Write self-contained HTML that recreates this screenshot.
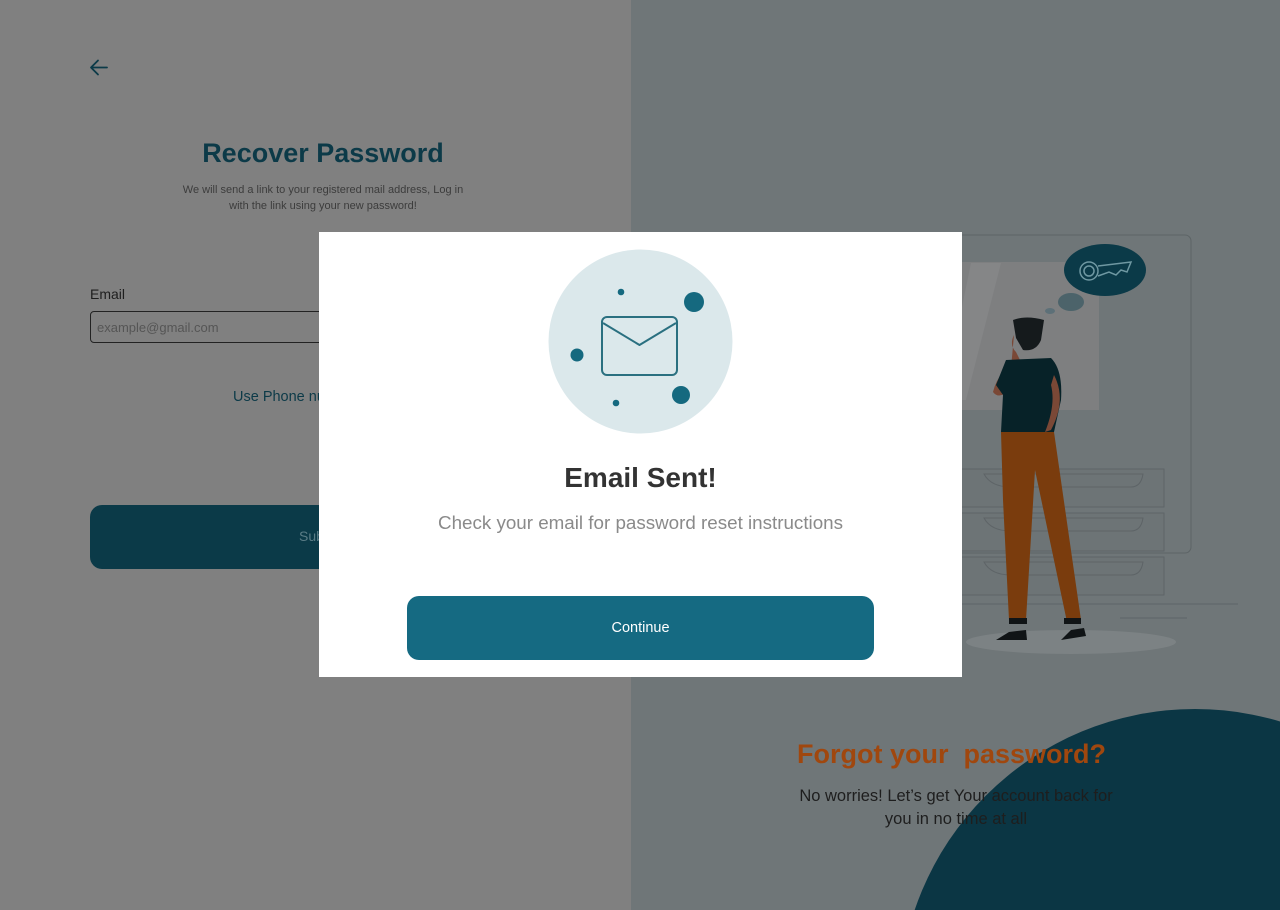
<!DOCTYPE html>
<html><head><meta charset="utf-8"><style>
*{margin:0;padding:0;box-sizing:border-box}
html,body{width:1280px;height:910px;overflow:hidden}
body{position:relative;font-family:"Liberation Sans",sans-serif;background:#808080}
.left{position:absolute;left:0;top:0;width:631px;height:910px;background:#808080;overflow:hidden}
.right{position:absolute;left:631px;top:0;width:649px;height:910px;background:#6f7678;overflow:hidden}
.abs{position:absolute}
</style></head><body>
<div class="left">
  <svg class="abs" style="left:88px;top:57px" width="22" height="22" viewBox="0 0 22 22"><path d="M19 10.5H3M10 3.5L3 10.5L10 17.5" fill="none" stroke="#0c3a48" stroke-width="1.8" stroke-linecap="round" stroke-linejoin="round"/></svg>
  <div class="abs" style="left:0;width:646px;top:138px;text-align:center;font-size:27px;font-weight:bold;color:#0c3a48">Recover Password</div>
  <div class="abs" style="left:123px;width:400px;top:182px;text-align:center;font-size:11px;line-height:16px;color:#3c3c3c;white-space:nowrap">We will send a link to your registered mail address, Log in<br>with the link using your new password!</div>
  <div class="abs" style="left:90px;top:286px;font-size:14px;color:#1e1e1e">Email</div>
  <div class="abs" style="left:90px;top:311px;width:560px;height:32px;border:1px solid #222;border-radius:4px;padding:8px 6px;font-size:13px;color:#555">example@gmail.com</div>
  <div class="abs" style="left:233px;top:389px;font-size:14.5px;color:#0c3a48">Use Phone number</div>
  <div class="abs" style="left:90px;top:505px;width:560px;height:64px;border-radius:12px;background:#0b3a48;color:#5a7c86;font-size:14px;padding:23px 0 0 209px">Submit</div>
</div>
<div class="right">
  <svg class="abs" style="left:0;top:0" width="649" height="910">
    <circle cx="564" cy="1005" r="296" fill="#0b3644"/>
    <rect x="240" y="235" width="320" height="318" rx="6" fill="none" stroke="#5d6466" stroke-width="1"/>
    <rect x="240" y="262" width="228" height="148" fill="#7e7f80"/>
    <path d="M340 263 L370 263 L335 400 L312 400Z" fill="#858687"/>
    <g fill="#6d7476" stroke="#5e6467" stroke-width="1">
      <rect x="270" y="469" width="263" height="38"/>
      <rect x="270" y="513" width="263" height="38"/>
      <rect x="270" y="557" width="263" height="38"/>
    </g>
    <g fill="none" stroke="#5e6467"><path d="M353 474 Q360 487 380 487 H500 Q510 487 512 474Z"/><path d="M353 518 Q360 531 380 531 H500 Q510 531 512 518Z"/><path d="M353 562 Q360 575 380 575 H500 Q510 575 512 562Z"/></g>
    <line x1="270" y1="604" x2="607" y2="604" stroke="#5e6467"/>
    <line x1="489" y1="618" x2="556" y2="618" stroke="#5e6467"/>
    <ellipse cx="440" cy="642" rx="105" ry="12" fill="#7c8284"/>
    <ellipse cx="474" cy="270" rx="41" ry="26" fill="#0b3a48"/>
    <g fill="none" stroke="#6f98a2" stroke-width="1.5"><circle cx="458" cy="271" r="9"/><circle cx="458" cy="271" r="5"/><path d="M467 266 L500 262 L496 272 L490 270 L485 275 L478 272 L467 276"/></g>
    <ellipse cx="440" cy="302" rx="13" ry="9" fill="#4c636a"/>
    <ellipse cx="419" cy="311" rx="5" ry="3" fill="#5d7078"/>
    <path d="M382 320 Q395 315 413 320 L410 340 Q405 352 392 350 L385 338Z" fill="#151a1c"/>
    <path d="M383 335 Q378 345 385 352 L389 360 L372 372 Q365 380 362 392 Q368 400 378 390Z" fill="#7a4836"/>
    <path d="M375 360 L420 358 Q432 370 430 400 L423 432 L370 432 L372 395 L365 385Z" fill="#072228"/>
    <path d="M423 375 Q436 400 420 430 L414 432 Q425 405 420 385Z" fill="#7a4836"/>
    <path d="M370 432 L423 432 L450 620 L436 622 L404 470 L395 620 L378 620 L372 500Z" fill="#7a3c0d"/>
    <rect x="378" y="618" width="18" height="6" fill="#101416"/>
    <rect x="433" y="618" width="17" height="6" fill="#101416"/>
    <path d="M365 640 L378 632 L395 630 L396 640Z" fill="#101416"/>
    <path d="M430 640 L440 630 L453 628 L455 636Z" fill="#101416"/>
  </svg>
  <div class="abs" style="left:-4px;width:649px;top:739px;text-align:center;font-size:27px;font-weight:bold;color:#a0470e">Forgot your&nbsp; password?</div>
  <div class="abs" style="left:100px;width:450px;top:785px;text-align:center;font-size:16.5px;line-height:23px;color:#1e1e1e;white-space:nowrap">No worries! Let’s get Your account back for<br>you in no time at all</div>
</div>
<div class="abs" style="left:319px;top:232px;width:643px;height:445px;background:#fff">
  <svg class="abs" style="left:229px;top:17px" width="185" height="185" viewBox="0 0 185 185">
    <circle cx="92.5" cy="92.5" r="92" fill="#dbe8eb"/>
    <circle cx="73" cy="43" r="3.3" fill="#15697f"/>
    <circle cx="146" cy="53" r="10" fill="#15697f"/>
    <circle cx="29" cy="106" r="6.5" fill="#15697f"/>
    <circle cx="133" cy="146" r="9" fill="#15697f"/>
    <circle cx="68" cy="154" r="3.3" fill="#15697f"/>
    <rect x="54" y="68" width="75" height="58" rx="5" fill="none" stroke="#2a7080" stroke-width="2"/>
    <path d="M55 74 L91.5 96 L128 74" fill="none" stroke="#2a7080" stroke-width="2" stroke-linejoin="round"/>
  </svg>
  <div class="abs" style="left:0;width:643px;top:230px;text-align:center;font-size:28px;font-weight:bold;color:#333">Email Sent!</div>
  <div class="abs" style="left:0;width:643px;top:280px;text-align:center;font-size:18.8px;color:#8a8a8a">Check your email for password reset instructions</div>
  <div class="abs" style="left:88px;top:364px;width:467px;height:64px;border-radius:12px;background:#156a82;color:#fff;font-size:14.5px;text-align:center;line-height:64px">Continue</div>
</div>
</body></html>
